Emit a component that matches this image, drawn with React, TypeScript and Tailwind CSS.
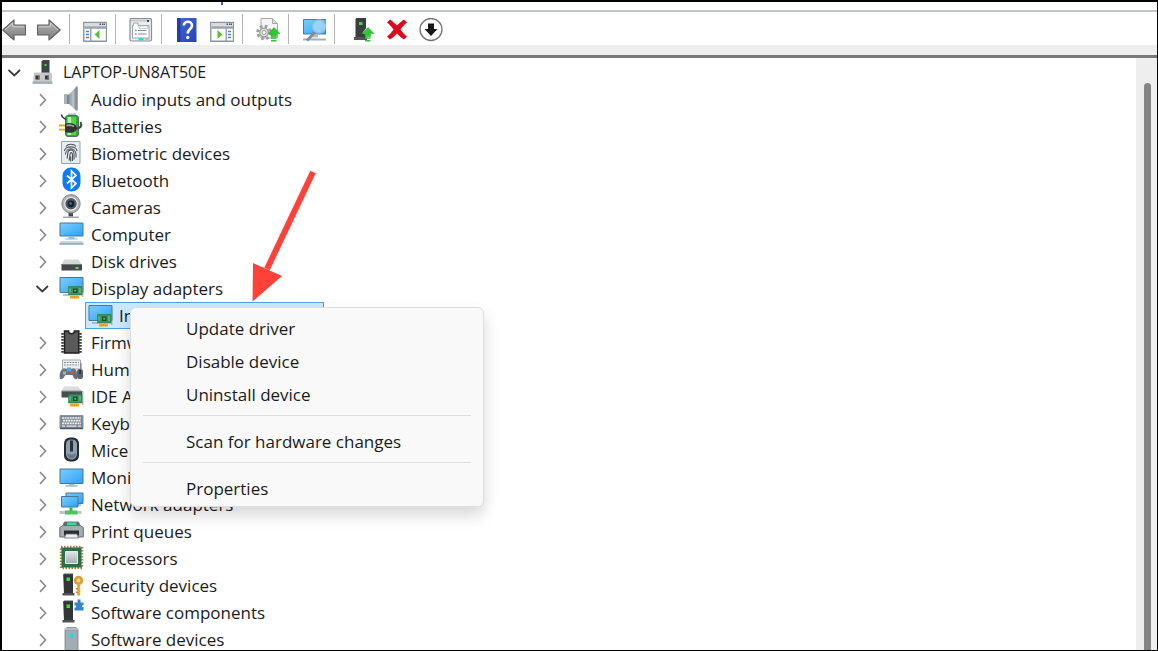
import React, { useState } from 'react';

type IconProps = { children: React.ReactNode };

const TreeIcon: React.FC<IconProps> = ({ children }) => (
  <svg viewBox="0 0 25 25" className="w-[25px] h-[25px] shrink-0 self-start" aria-hidden="true">
    {children}
  </svg>
);

const ToolIcon: React.FC<IconProps> = ({ children }) => (
  <svg viewBox="0 0 24 24" className="w-6 h-6" aria-hidden="true">
    {children}
  </svg>
);

const Defs = () => (
  <svg className="absolute w-0 h-0" aria-hidden="true">
    <defs>
      <linearGradient id="screen" x1="0" y1="0" x2="1" y2="1">
        <stop offset="0" stopColor="#7ccdfb" />
        <stop offset="0.5" stopColor="#55b8fa" />
        <stop offset="1" stopColor="#2ba0f5" />
      </linearGradient>
      <linearGradient id="steel" x1="0" y1="0" x2="1" y2="0">
        <stop offset="0" stopColor="#8b969f" />
        <stop offset="0.6" stopColor="#bcc5cc" />
        <stop offset="1" stopColor="#7d8790" />
      </linearGradient>
      <linearGradient id="arrow" x1="0" y1="0" x2="0" y2="1">
        <stop offset="0" stopColor="#b5b5b5" />
        <stop offset="1" stopColor="#7c7c7c" />
      </linearGradient>
      <linearGradient id="book" x1="0" y1="0" x2="1" y2="1">
        <stop offset="0" stopColor="#3f68dc" />
        <stop offset="1" stopColor="#2743b5" />
      </linearGradient>
      <linearGradient id="silver" x1="0" y1="0" x2="0" y2="1">
        <stop offset="0" stopColor="#e2e4e6" />
        <stop offset="1" stopColor="#a9adb0" />
      </linearGradient>
    </defs>
  </svg>
);

const Card = () => (
  <g>
    <path d="M23.8 8v14" stroke="#8c8c8c" strokeWidth="0.9" />
    <path d="M9.5 11.5h13.500v8.500H9.500z" fill="#37935f" stroke="#2a7a4c" strokeWidth="0.6" />
    <path d="M14 13.500h4.500v4.500H14z" fill="#1b4f35" />
    <path d="M15.300 14.800h1.800v1.800h-1.800z" fill="#6fb38b" />
    <path d="M11 13.500v4M21 13v5" stroke="#86d6a5" strokeWidth="0.9" />
    <path d="M11 20.500h9v3h-9z" fill="#f4a81c" />
    <path d="M13.200 21v2.500M15.500 21v2.500M17.800 21v2.500" stroke="#d98c05" strokeWidth="0.5" />
  </g>
);

const DisplayIcon = () => (
  <TreeIcon>
    <path d="M1 2.500h23v15H1z" fill="url(#screen)" stroke="#477895" strokeWidth="1" />
    <path d="M4 20h6" stroke="#9aa7b0" strokeWidth="1.400" />
    <Card />
  </TreeIcon>
);

const Tower = () => (
  <g>
    <path d="M4 2.500L5.500 1.500H14V22H5z" fill="#555" />
    <path d="M5 2.500h9V21H5z" fill="#333637" />
    <path d="M3.500 21h12v2.500h-12z" fill="#505354" />
    <path d="M7.500 5.500h3.500v3.500H7.500z" fill="#37e33b" />
  </g>
);

const ComputerRoot = () => (
  <TreeIcon>
    <path d="M10.500 2.500L12 1h6.500v13h-8z" fill="#3f4446" />
    <path d="M13.500 5h2v2h-2z" fill="#3be03c" />
    <path d="M3 13.500h17l1 2V24H2z" fill="#c3c8ca" />
    <path d="M1.500 22.500h20V25h-20z" fill="#a9afb2" />
    <path d="M4.500 16.500h4v4h-4zM14 16.500h4v4h-4z" fill="#303436" />
    <path d="M7 16.500h1.500v4H7zM16.500 16.500H18v4h-1.500z" fill="#7d6a66" />
  </TreeIcon>
);

// names that run under the context menu are kept short
const devices: { name: string; icon: React.ReactNode; open?: boolean }[] = [
  {
    name: 'Audio inputs and outputs',
    icon: (
      <TreeIcon>
        <path d="M5 8.500h5v9.500H5z" fill="#7d8992" />
        <path d="M5 8.500h3v9.500H5z" fill="#a8b2ba" />
        <path d="M10 8.500L17 1v23.500L10 18z" fill="url(#steel)" />
        <path d="M17 0.500h1.800v24H17z" fill="#8a939a" />
      </TreeIcon>
    ),
  },
  {
    name: 'Batteries',
    icon: (
      <TreeIcon>
        <path d="M9 .5h8v3H9z" fill="#b4bcb4" />
        <rect x="6.500" y="2.500" width="13" height="21" rx="2.500" fill="#36a836" stroke="#5b6b5b" />
        <path d="M8.500 4h4V22h-4z" fill="#b4f5a6" />
        <path d="M12.500 4H17v18h-4.500z" fill="#4fd548" />
        <path d="M2.500 1.500c0 4 3.500 3 4.500 5.500" fill="none" stroke="#3b3b3b" strokeWidth="1.600" />
        <path d="M17 15.500c5.500 0 6-3 4.500-6.500" fill="none" stroke="#3b4743" strokeWidth="2" />
        <path d="M6 10.500c5-1.500 9 0 11.500 2.500v4C15 20 10 20.500 6 19z" fill="#2f3232" />
        <path d="M7.500 12.500c3-.8 5.500-.3 7.500 1" fill="none" stroke="#a1a6a6" strokeWidth="1.600" />
        <path d="M0 12.500h6M0 16.700h6" stroke="#dfa817" strokeWidth="1.800" />
      </TreeIcon>
    ),
  },
  {
    name: 'Biometric devices',
    icon: (
      <TreeIcon>
        <path d="M2.500 1.500h18.500v22H2.500z" fill="#e4edef" stroke="#93a4ab" />
        <g fill="none" stroke="#4c5356" strokeWidth="1.100">
          <path d="M7 6.500C9 3.500 15 3.500 17 6.500" />
          <path d="M5.500 11c0-5.500 12.500-5.500 12.500 0" />
          <path d="M6.500 14.500c0-7.500 10.500-7.500 10.500 0v3" />
          <path d="M8 18.500c1-3 0-7 2-8 3-1.500 5 0 5 3.500v5.500" />
          <path d="M10 20.500c1-3 .5-6 1.500-7.500 1-1 2 0 2 2v6" />
          <path d="M11.700 21.500v-5" />
        </g>
      </TreeIcon>
    ),
  },
  {
    name: 'Bluetooth',
    icon: (
      <TreeIcon>
        <rect x="3.500" y="0.500" width="18" height="24" rx="8.500" fill="#0a7cf7" />
        <path d="M8 8.500l9 8-4.500 4.500V4L17 8.500l-9 8" fill="none" stroke="#fff" strokeWidth="1.700" />
      </TreeIcon>
    ),
  },
  {
    name: 'Cameras',
    icon: (
      <TreeIcon>
        <path d="M9.500 18.500h4.500v4H9.500z" fill="#46494b" />
        <path d="M4 23.300h16" stroke="#a2a5a7" strokeWidth="1.500" />
        <circle cx="12" cy="9.800" r="9.200" fill="#b0b2b3" stroke="#85888a" />
        <circle cx="12" cy="9.800" r="6.300" fill="#55595c" stroke="#eceded" strokeWidth="1.200" />
        <circle cx="12" cy="9.800" r="3.400" fill="#14202e" />
        <circle cx="11.500" cy="9.500" r="1.400" fill="#3b6fa8" />
      </TreeIcon>
    ),
  },
  {
    name: 'Computer',
    icon: (
      <TreeIcon>
        <path d="M1 2h23v13H1z" fill="url(#screen)" stroke="#477895" />
        <path d="M9.500 15.500h6v2.500h-6z" fill="#8ec4e5" />
        <path d="M6.500 18h12" stroke="#a5b4c0" strokeWidth="1" />
        <path d="M1.500 20h22l1 3H.5z" fill="#c6d7e5" />
        <path d="M.5 23h24" stroke="#7893a6" strokeWidth="1.200" />
      </TreeIcon>
    ),
  },
  {
    name: 'Disk drives',
    icon: (
      <TreeIcon>
        <path d="M5.500 11.500h14l3 5h-20z" fill="#d5d7d8" />
        <path d="M2.500 16h20.500v6.500H2.500z" fill="#454849" />
        <path d="M2.500 16h20.500v1H2.500z" fill="#777a7b" />
        <path d="M16.500 19h3v2h-3z" fill="#4be04c" />
      </TreeIcon>
    ),
  },
  { name: 'Display adapters', icon: <DisplayIcon />, open: true },
  {
    name: 'Firmware',
    icon: (
      <TreeIcon>
        <path d="M3.500 4v20M21.500 4v20" stroke="#3c3c3c" strokeWidth="2.500" strokeDasharray="1.800 1.200" />
        <path d="M5.500 2h4c0 3.500 6 3.500 6 0h4.300v22H5.500z" fill="#59595a" stroke="#1f1f1f" strokeWidth="1.500" />
      </TreeIcon>
    ),
  },
  {
    name: 'Human',
    icon: (
      <TreeIcon>
        <path d="M3.500 4h18v9h-18z" fill="#eef0f1" stroke="#a3a8ab" />
        <path d="M5 6.500h15M5 9h15" stroke="#7e8589" strokeWidth="1.200" strokeDasharray="1.800 1" />
        <path d="M1 23c-1-5 .5-10.500 4.500-10.500 2 0 2 1 4.500 1s3-1 4.500-1c3.500 0 4 5.500 3.500 10.500-3.500 1-3.500-3.500-5-4h-6c-2 .5-2 5-6 4z" fill="#69737b" />
        <path d="M4 15.500h3v3H4z" fill="#a9b2b8" />
        <path d="M8 11.500h4v4H8z" fill="#4aa5ea" />
        <circle cx="12.700" cy="16.500" r="1.400" fill="#ef5330" />
        <path d="M22 7v6" stroke="#6b7379" />
        <rect x="18" y="13" width="6" height="10" rx="2.500" fill="#5a646e" />
        <path d="M20.300 14h1.500v4h-1.500z" fill="#20262b" />
      </TreeIcon>
    ),
  },
  {
    name: 'IDE ATA',
    icon: (
      <TreeIcon>
        <path d="M5 3.500h14l3.500 4.500h-20z" fill="#dadcdd" />
        <path d="M2.500 8H23v6.500H2.500z" fill="#4a4d4f" />
        <path d="M3 8h19.500" stroke="#999" strokeWidth="1" />
        <Card />
      </TreeIcon>
    ),
  },
  {
    name: 'Keyboards',
    icon: (
      <TreeIcon>
        <path d="M1 5.500h23v13H1z" fill="#7d8a94" stroke="#8b959c" />
        <path d="M1 18.500h23" stroke="#4e5961" strokeWidth="1.500" />
        <path d="M3 8h19M4 10.700h17.500M3 13.400h19" stroke="#f1f3f4" strokeWidth="1.700" strokeDasharray="1.900 .7" />
        <path d="M3 16.200h3M7.500 16.200h10M19 16.200h3" stroke="#e3e6e8" strokeWidth="1.300" />
      </TreeIcon>
    ),
  },
  {
    name: 'Mice',
    icon: (
      <TreeIcon>
        <rect x="5" y=".5" width="15" height="24" rx="6" fill="#252a2e" />
        <path d="M7 7c0-3 2-4.500 5.500-4.500S18 4 18 7v9c0 4-2 6.500-5.500 6.500S7 20 7 16z" fill="#8d9fb0" />
        <path d="M8 16c2 2 7 2 9 0-.5 3.500-2 5.500-4.500 5.500S8.500 19.500 8 16z" fill="#64788b" />
        <rect x="11" y="3.500" width="3" height="11" fill="#2b3035" />
      </TreeIcon>
    ),
  },
  {
    name: 'Monitors',
    icon: (
      <TreeIcon>
        <path d="M1 5h23v14.500H1z" fill="url(#screen)" stroke="#477895" />
        <path d="M10 20h5.500v1.500H10z" fill="#8ec4e5" />
        <path d="M6.500 22h12" stroke="#a3b0ba" strokeWidth="1.400" />
      </TreeIcon>
    ),
  },
  {
    name: 'Network adapters',
    icon: (
      <TreeIcon>
        <path d="M7 2h17v10.500H7z" fill="url(#screen)" stroke="#477895" />
        <path d="M18 14h4" stroke="#9aa7b0" strokeWidth="1.300" />
        <path d="M2.500 5.500h16.500V16H2.500z" fill="url(#screen)" stroke="#477895" />
        <path d="M10.500 16.500h3V20h-3z" fill="#35b44a" />
        <path d="M.5 21.500h22" stroke="#bfc5c9" strokeWidth="3" />
        <path d="M6 19.500h12.500v4H6z" fill="#45c95a" />
      </TreeIcon>
    ),
  },
  {
    name: 'Print queues',
    icon: (
      <TreeIcon>
        <path d="M5.500 4h14l2 4.500h-18z" fill="#59666f" stroke="#6d7479" />
        <path d="M8 4.500h9.500v2.500H8z" fill="#3ddc97" />
        <path d="M.8 9.500l3-2h17.500l3 2V19H.8z" fill="#a6adb1" stroke="#6a7176" />
        <path d="M5 12.500h15v5H5z" fill="#2b2e30" />
        <path d="M7 16h11l1.500 4h-14z" fill="#eceeef" stroke="#666c70" strokeWidth="0.800" />
      </TreeIcon>
    ),
  },
  {
    name: 'Processors',
    icon: (
      <TreeIcon>
        <rect x="2" y="2" width="21" height="21" fill="none" stroke="#a78436" strokeWidth="2.500" strokeDasharray="1.500 1.500" />
        <path d="M2.500 2.500h20v20h-20z" fill="#2f6c4d" />
        <path d="M6.500 6.500h12v12h-12z" fill="url(#silver)" stroke="#e9e9e9" />
      </TreeIcon>
    ),
  },
  {
    name: 'Security devices',
    icon: (
      <TreeIcon>
        <Tower />
        <circle cx="19.500" cy="8.500" r="3.300" fill="#f3d9a4" stroke="#dc9f35" strokeWidth="2.800" />
        <path d="M18.200 12h3v11l-1.500 1-1.500-1z" fill="#e5a93b" />
        <path d="M16.800 16h2v1.500h-2zM16.800 19.500h2V21h-2z" fill="#c98519" />
      </TreeIcon>
    ),
  },
  {
    name: 'Software components',
    icon: (
      <TreeIcon>
        <Tower />
        <path d="M15.500 3.500h3v-3h3v3h3v3h-1.500v1.500h1.500v3.500h-9V8.500h1.500V6.500h-1.500z" fill="#3585c6" />
      </TreeIcon>
    ),
  },
  {
    name: 'Software devices',
    icon: (
      <TreeIcon>
        <path d="M5.500 3L8 1h9l2.500 2v22h-14z" fill="#8f9aa1" />
        <path d="M7 4.500h11V25H7z" fill="#a2adb3" />
        <path d="M5.500 3h14" stroke="#d0d6d9" strokeWidth="1.200" />
        <path d="M11 8h3.500v3.500H11z" fill="#1fd6e5" />
      </TreeIcon>
    ),
  },
];

const BackArrow = ({ flip = false }: { flip?: boolean }) => (
  <ToolIcon>
    <g transform={flip ? 'matrix(-1 0 0 1 24 0)' : undefined}>
      <path
        d="M.8 12L12 2v5h11.500v10H12v5z"
        fill="url(#arrow)"
        stroke="#646464"
        strokeWidth="1.200"
        strokeLinejoin="round"
      />
      <path d="M3 12l7.500-7v3.800H22" fill="none" stroke="#cfcfcf" strokeWidth="1" />
    </g>
  </ToolIcon>
);

const WindowPane = ({ flip = false }: { flip?: boolean }) => (
  <ToolIcon>
    <path d="M.8 4.500h22.700v18.700H.8z" fill="#fff" stroke="#8e969c" strokeWidth="1.400" />
    <path d="M1.500 5h21.500v2.800H1.500z" fill="#d5dbe0" />
    <path d="M16.500 6.300h1.500M19 6.300h1.500M21 6.300h1" stroke="#3d536b" strokeWidth="1.400" />
    <path d="M1.500 9.500h21.500" stroke="#9ba4ab" strokeWidth="2.600" />
    <g transform={flip ? 'matrix(-1 0 0 1 24 0)' : undefined}>
      <path d="M7.800 10.500v12.500" stroke="#8e969c" strokeWidth="1.300" />
      <path d="M3 13.500h3M3 16.500h3M3 19.500h3" stroke="#4a86c6" strokeWidth="1.300" />
      <path d="M11.500 16.500l5-4.500v9z" fill="#5cc32b" />
    </g>
  </ToolIcon>
);

const GreenArrow = () => (
  <g>
    <path d="M18 9.500l6 6h-3.500v3h-5.500v-3H12z" fill="#2ec832" stroke="#20a523" strokeWidth="0.500" />
    <path d="M15 20h5.500M15 22.700h5.500" stroke="#2ec832" strokeWidth="1.600" />
  </g>
);

const toolGroups: { label: string; icon: React.ReactNode }[][] = [
  [
    {
      label: 'Show/Hide Console Tree',
      icon: <WindowPane />,
    },
  ],
  [
    {
      label: 'Properties',
      icon: (
        <ToolIcon>
          <rect x="1" y=".5" width="21.500" height="22.500" rx="1.500" fill="#ebecec" stroke="#8b9095" strokeWidth="1.200" />
          <path d="M2 2.500h19.500" stroke="#c3c8cc" strokeWidth="2" />
          <path d="M18 2l2 2M20 2l-2 2" stroke="#3c4b5a" strokeWidth="1" />
          <path d="M3.500 7.500V20h16.500V7.500H9V5H4.500v2.500z" fill="#fff" stroke="#9fa6ab" />
          <path d="M10 8h9v2.500H10z" fill="#fff" stroke="#b3b9bd" strokeWidth="0.800" />
          <path d="M6 12.500h1.600M6 16h1.600" stroke="#1fb7e8" strokeWidth="1.600" />
          <path d="M9 12.500h8.500M9 16h8.500" stroke="#858d93" strokeWidth="1.200" />
          <path d="M9.500 20h5v2.500h-5z" fill="#2fd0f0" />
          <path d="M16 20h4.500v2.500H16z" fill="#b9bfc3" />
        </ToolIcon>
      ),
    },
  ],
  [
    {
      label: 'Help',
      icon: (
        <ToolIcon>
          <path d="M2 0h19.500v24H2z" fill="url(#book)" />
          <path d="M2 0h3.500v24H2z" fill="#21409f" />
          <path d="M8.800 7.500c0-5 8.200-5 8.200 0 0 3.500-4.300 3.500-4.300 8" fill="none" stroke="#fff" strokeWidth="2.600" />
          <circle cx="12.700" cy="19.500" r="1.700" fill="#fff" />
        </ToolIcon>
      ),
    },
    {
      label: 'Show/Hide Action Pane',
      icon: <WindowPane flip />,
    },
  ],
  [
    {
      label: 'Update driver',
      icon: (
        <ToolIcon>
          <path d="M5 .5h11.500l5 5V20H5z" fill="#f5f5f5" stroke="#a6a6a6" />
          <path d="M16.500.5v5h5" fill="#dcdcdc" stroke="#a6a6a6" />
          <circle cx="8" cy="14.500" r="6.300" fill="none" stroke="#a0a0a0" strokeWidth="3" strokeDasharray="2.600 2.350" />
          <circle cx="8" cy="14.500" r="4.300" fill="#dedede" stroke="#9b9b9b" strokeWidth="1.200" />
          <circle cx="8" cy="14.500" r="2" fill="#fff" stroke="#9b9b9b" />
          <GreenArrow />
        </ToolIcon>
      ),
    },
  ],
  [
    {
      label: 'Scan for hardware changes',
      icon: (
        <ToolIcon>
          <path d="M1.500 1.500h22.500v14.500H1.500z" fill="url(#screen)" stroke="#477f9f" />
          <path d="M1 21.500h23" stroke="#9db0bd" strokeWidth="2" />
          <path d="M9 17h7v2.500H9z" fill="#a8c2d1" />
          <path d="M13 14L5 22.500" stroke="#808b93" strokeWidth="2.600" />
          <circle cx="17" cy="8.500" r="6.500" fill="#a4d8f9" fillOpacity=".85" stroke="#94bfd8" strokeWidth="1.500" />
        </ToolIcon>
      ),
    },
  ],
];

const deviceActions = [
  {
    label: 'Enable device',
    icon: (
      <ToolIcon>
        <path d="M4.500 1l1-1H15v20H4.500z" fill="#3a3d3e" />
        <path d="M3 19h13v3H3z" fill="#515455" />
        <path d="M8 4h3.500v3H8z" fill="#36e03a" />
        <g transform="translate(-1 0)">
          <path d="M17 9l6.500 6.500H12z" fill="#fff" />
          <GreenArrow />
        </g>
      </ToolIcon>
    ),
  },
  {
    label: 'Uninstall device',
    icon: (
      <ToolIcon>
        <path
          d="M2 4.500L5 1.500c2.500 1.500 4.500 3.500 7 6 2.500-2.500 4.500-4.500 7-6l3 3c-2.500 2-4.500 4-6.500 7 2 3 4 5 6.500 7l-3 3c-2.500-1.500-4.500-3.500-7-6-2.500 2.500-4.500 4.500-7 6l-3-3c2.500-2 4.500-4 6.500-7-2-3-4-5-6.500-7z"
          fill="#dd0a1b"
        />
      </ToolIcon>
    ),
  },
  {
    label: 'Disable device',
    icon: (
      <ToolIcon>
        <circle cx="12" cy="11.500" r="11" fill="#fff" stroke="#747474" strokeWidth="1.300" />
        <path d="M9 5.500h6v5.500h3.500L12 18l-6.500-7H9z" fill="#161616" />
      </ToolIcon>
    ),
  },
];

const Chevron = ({ open, label }: { open?: boolean; label: string }) => (
  <button type="button" aria-label={label} className="w-6 h-[27px] mr-1 shrink-0 flex items-center justify-center">
    <svg viewBox="0 0 14 14" className="w-[14px] h-[14px] mt-px" fill="none" aria-hidden="true">
      {open ? (
        <path d="M.5 4l5.800 5.500L12 4" stroke="#3a3a3a" strokeWidth="1.800" />
      ) : (
        <path d="M4 1.200L9.500 7 4 12.800" stroke="#8f8f8f" strokeWidth="1.700" />
      )}
    </svg>
  </button>
);

const menuItem = 'block w-full h-[33px] pl-[55px] text-left hover:bg-[#eeeeee]';

const ContextMenu = () => (
  <div
    role="menu"
    className="absolute z-10 left-[45px] top-[5px] w-[354px] pt-1 pb-px bg-[#f9f9f9] border border-[#dedede] rounded-md shadow-[0_8px_16px_rgba(0,0,0,0.16)]"
  >
    <button type="button" role="menuitem" className={menuItem}>Update driver</button>
    <button type="button" role="menuitem" className={menuItem}>Disable device</button>
    <button type="button" role="menuitem" className={menuItem}>Uninstall device</button>
    <hr className="mx-3 mt-1 mb-[9px] border-[#dfdfdf]" />
    <button type="button" role="menuitem" className={menuItem}>Scan for hardware changes</button>
    <hr className="mx-3 mt-1 mb-[9px] border-[#dfdfdf]" />
    <button type="button" role="menuitem" className={menuItem}>Properties</button>
  </div>
);

const Pointer = () => (
  <svg viewBox="0 0 66 134" className="absolute z-20 left-[165px] bottom-full w-[66px] h-[134px] pointer-events-none" aria-hidden="true">
    <path d="M63 4L17 101" stroke="#ff4238" strokeWidth="6" />
    <path d="M2.500 133.500l.5-38.500 29 13z" fill="#ff4238" />
  </svg>
);

export default function App() {
  const [selected, setSelected] = useState(true);

  return (
    <div className="h-screen flex flex-col overflow-hidden bg-white border-t-2 border-l-2 border-r border-b border-black font-['Open_Sans',sans-serif] text-[17px] leading-[27px] text-[#1b1b1b]">
      <Defs />
      <div className="h-2 shrink-0 flex">
        <span className="ml-[219px] w-[2px] h-[3px] bg-[#4b5c9c]" />
      </div>

      <div role="toolbar" aria-label="Device Manager" className="h-[35px] shrink-0 flex items-start border-t-2 border-[#c2c5c9] pt-0.5">
        <div className="h-[30px] w-[68px] flex items-start gap-[11px] pt-1 border-r border-[#b5b5b5]">
          <button type="button" aria-label="Back"><BackArrow /></button>
          <button type="button" aria-label="Forward"><BackArrow flip /></button>
        </div>
        {toolGroups.map((group, i) => (
          <div key={i} className="h-[30px] flex items-start gap-[11px] pl-[13px] pr-2 pt-1 border-r border-[#b5b5b5]">
            {group.map((tool) => (
              <button key={tool.label} type="button" aria-label={tool.label}>{tool.icon}</button>
            ))}
          </div>
        ))}
        <div className="h-[30px] flex items-start gap-[10px] pl-4 pt-1">
          {deviceActions.map((tool) => (
            <button key={tool.label} type="button" aria-label={tool.label}>{tool.icon}</button>
          ))}
        </div>
      </div>

      <div className="h-[13px] shrink-0 bg-[#eeeeee] border-b-3 border-[#7b7878]" />

      <div className="flex-1 min-h-0 flex">
        <ul role="tree" className="flex-1 min-w-0 overflow-hidden pt-px pl-px whitespace-nowrap">
          <li role="treeitem" aria-expanded="true" aria-selected="false">
            <div className="flex items-center h-[27px]">
              <Chevron open label="Collapse LAPTOP-UN8AT50E" />
              <ComputerRoot />
              <span className="ml-[7px] text-[16px]">LAPTOP-UN8AT50E</span>
            </div>
            <ul role="group" className="pl-7">
              {devices.map((device) => (
                <li key={device.name} role="treeitem" aria-expanded={!!device.open} aria-selected="false">
                  <div className="flex items-center h-[27px]">
                    <Chevron open={device.open} label={device.name} />
                    {device.icon}
                    <span className="ml-[7px]">{device.name}</span>
                  </div>
                  {device.open && (
                    <ul role="group" className="pl-[54px]">
                      <li role="treeitem" aria-selected={selected} className="relative">
                        <div
                          onClick={() => setSelected(true)}
                          className="flex items-center w-[239px] h-[27px] pl-0.5 bg-[#cce8ff] border border-[#4a9fe0]"
                        >
                          <DisplayIcon />
                          <span className="ml-1.5">Intel(R)</span>
                        </div>
                        <Pointer />
                        <ContextMenu />
                      </li>
                    </ul>
                  )}
                </li>
              ))}
            </ul>
          </li>
        </ul>
        <div className="w-[21px] shrink-0 bg-[#eeeeee] pt-[25px] pl-2">
          <div className="w-[7px] h-full rounded-t-sm bg-[#858585]" />
        </div>
      </div>
    </div>
  );
}
